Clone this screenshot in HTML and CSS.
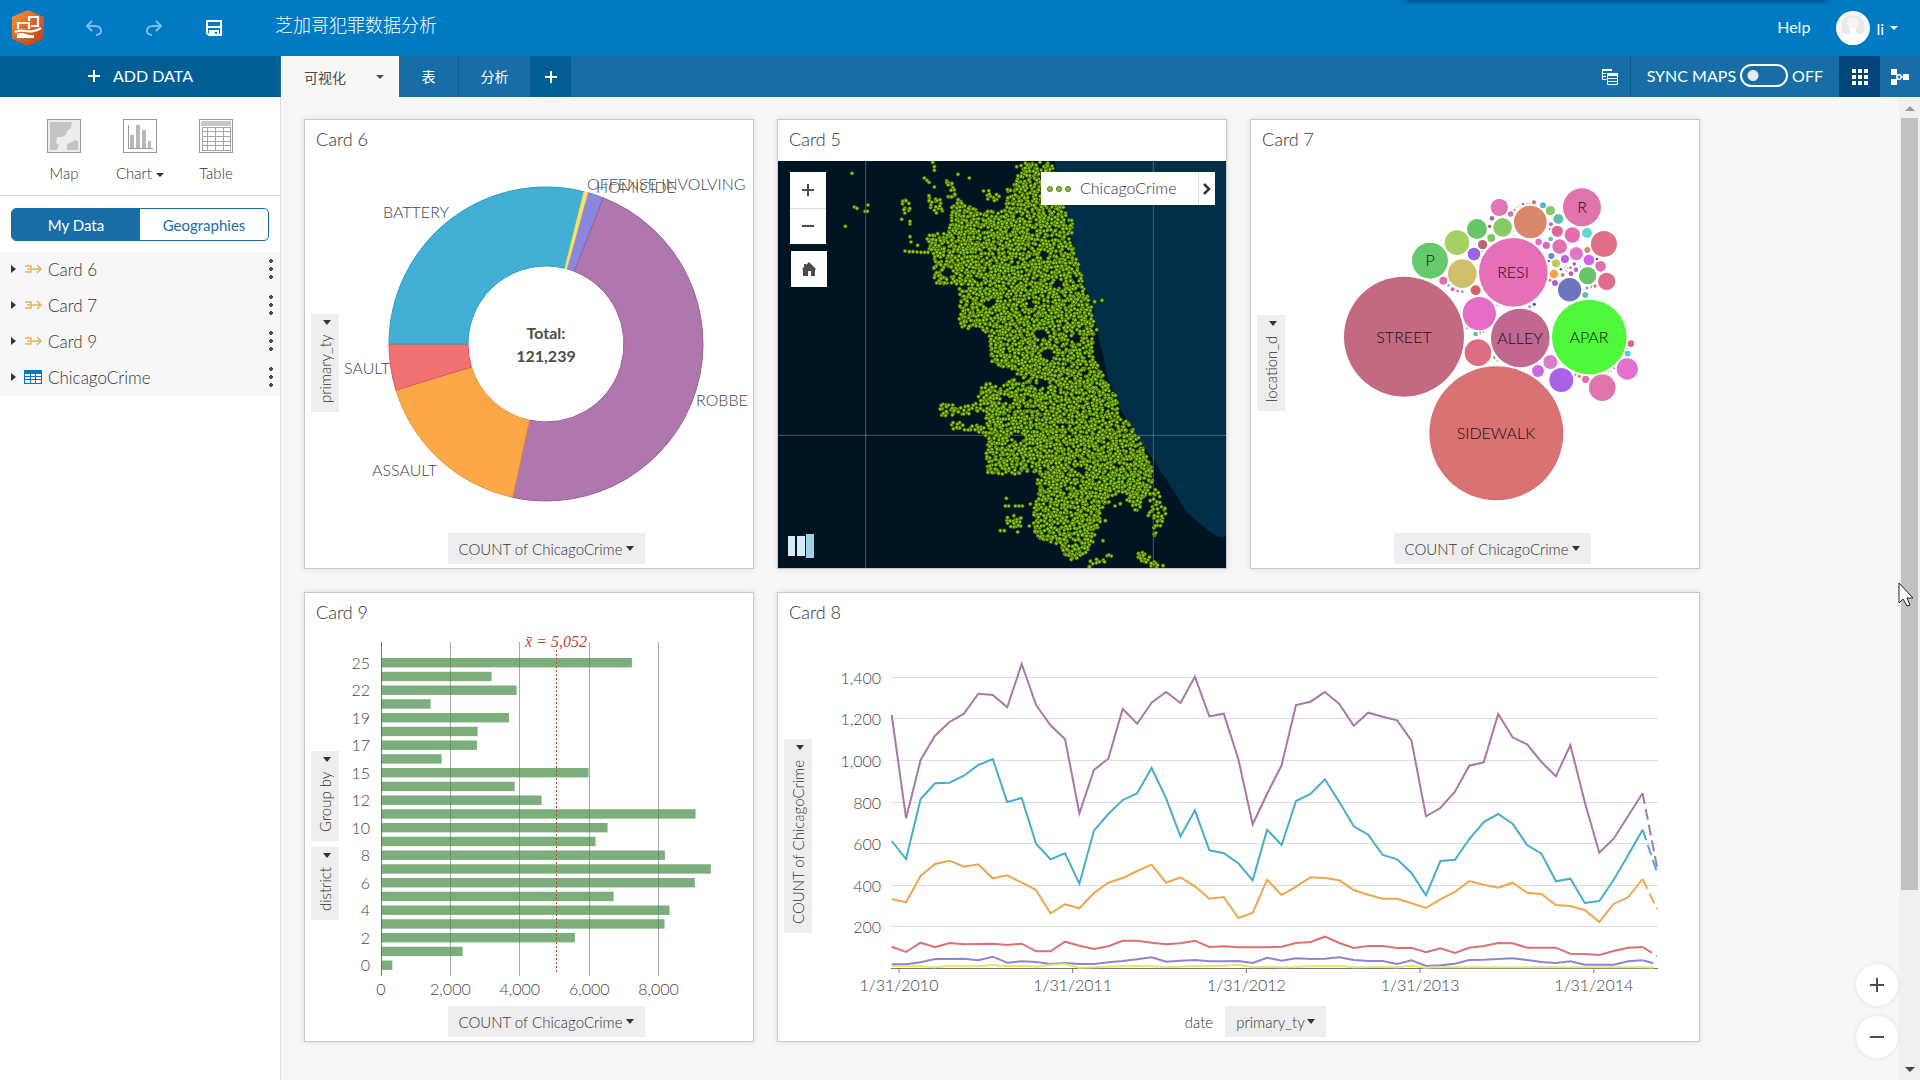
FILE: index.html
```html
<!DOCTYPE html>
<html lang="zh-CN">
<head>
    <meta charset="UTF-8">
    <title>芝加哥犯罪数据分析</title>
    <link rel="stylesheet" href="styles.css">
</head>
<body>
<header class="header">
    <a class="logo" href="#" aria-label="Home">
        <svg width="34" height="38" viewBox="0 0 34 38">
            <defs>
                <linearGradient id="hex" x1="0" y1="0" x2="1" y2="1">
                    <stop offset="0" stop-color="#f0a030"/>
                    <stop offset="0.5" stop-color="#d9622b"/>
                    <stop offset="1" stop-color="#b5421f"/>
                </linearGradient>
            </defs>
            <path d="M17 1 L33 8 V30 L17 37 L1 30 V8 Z" fill="url(#hex)"/>
            <path d="M7 20 V14 H18 V20 M18 9 V8 H27 V17 H20 M18 12 V8" fill="none" stroke="#fff" stroke-width="2.2"/>
            <path d="M4 23 C12 18 18 27 30 19" fill="none" stroke="#fff" stroke-width="2.2"/>
            <path d="M6 25 C12 22 16 27 23 26 V29 H6 Z" fill="#fff"/>
        </svg>
    </a>
    <button class="icon-btn faded" aria-label="Undo">
        <svg width="18" height="18" viewBox="0 0 18 18"><path d="M7 2 L2 7 L7 12 M2 7 H10 C14 7 16 9 16 12 C16 14 14 16 11 16" /></svg>
    </button>
    <button class="icon-btn faded" aria-label="Redo">
        <svg width="18" height="18" viewBox="0 0 18 18"><path d="M11 2 L16 7 L11 12 M16 7 H8 C4 7 2 9 2 12 C2 14 4 16 7 16"/></svg>
    </button>
    <button class="icon-btn" aria-label="Save">
        <svg width="18" height="18" viewBox="0 0 18 18"><path d="M2 2 H16 V16 H4 L2 14 Z M2 8 H16 M5 16 V12 H13 V16"/><path d="M7 13 H9 V15 H7 Z"/></svg>
    </button>
    <h1 class="title">芝加哥犯罪数据分析</h1>
    <a class="help" href="#">Help</a>
    <button class="user">
        <svg width="34" height="34" viewBox="0 0 34 34">
            <circle cx="17" cy="17" r="17" fill="#f7f7f7"/>
            <path d="M6 12 C6 2 28 2 28 12 V20 C28 25 6 25 6 20 Z" fill="#e9e9e9"/>
            <circle cx="17" cy="12" r="6" fill="#f6f4f2"/>
            <path d="M14 17 H20 V22 C26 23 28 25 29 29 C22 36 12 36 5 29 C6 25 8 23 14 22 Z" fill="#fff"/>
        </svg>
        <span>li</span>
        <i class="caret"></i>
    </button>
</header>

<nav class="toolbar">
    <button class="add-data">
        <svg width="14" height="14" viewBox="0 0 14 14"><path d="M7 1 V13 M1 7 H13"/></svg>
        ADD DATA
    </button>
    <button class="tab active">可视化 <i class="caret"></i></button>
    <button class="tab">表</button>
    <button class="tab wide">分析</button>
    <button class="tab-add" aria-label="Add page">
        <svg width="14" height="14" viewBox="0 0 14 14"><path d="M7 1 V13 M1 7 H13"/></svg>
    </button>
    <button class="copy-btn" aria-label="Card list">
        <svg width="18" height="18" viewBox="0 0 18 18">
            <path d="M5.500 11.500 H1.500 V1 M2 5.500 H5 M2 8.500 H5" fill="none" stroke="#fff"/>
            <path d="M6.500 5 V16.500 H16.500 V5 M7 10.500 H16 M7 13.500 H16" fill="none" stroke="#fff"/>
            <path d="M1 1 H11 V3 H1 Z M6 5 H17 V8 H6 Z" fill="#fff"/>
        </svg>
    </button>
    <label class="sync">SYNC MAPS <input type="checkbox"> <span>OFF</span></label>
    <button class="view-btn active" aria-label="Page view">
        <svg width="16" height="16" viewBox="0 0 16 16" fill="#fff">
            <path d="M0 0h4v4H0zM6 0h4v4H6zM12 0h4v4h-4zM0 6h4v4H0zM6 6h4v4H6zM12 6h4v4h-4zM0 12h4v4H0zM6 12h4v4H6zM12 12h4v4h-4z"/>
        </svg>
    </button>
    <button class="view-btn" aria-label="Analysis view">
        <svg width="20" height="18" viewBox="0 0 20 18">
            <path d="M1 1h6v6H1zM1 11h6v6H1zM13 6h6v6h-6z" fill="#fff"/>
            <path d="M5 5 L8 8 M5 13 L8 10 M11 9 H14" stroke="#fff" stroke-width="1.6"/>
            <circle cx="9" cy="9" r="2.2" fill="none" stroke="#fff" stroke-width="1.4"/>
        </svg>
    </button>
</nav>

<div class="main">
    <aside class="sidebar">
        <div class="tools">
            <button class="tool">
                <svg width="34" height="34" viewBox="0 0 34 34">
                    <rect x="0.500" y="0.500" width="33" height="33" fill="#ededed" stroke="#999"/>
                    <path d="M3 3 H25 L24 9 L20 12 L19 16 L14 18 L10 18 L9 24 L12 26 L10 31 H3 Z" fill="#c4c4c4"/>
                    <path d="M20 31 V25 L25 23 L28 21 L31 22 V31 Z" fill="#c4c4c4"/>
                </svg>
                <span>Map</span>
            </button>
            <button class="tool">
                <svg width="34" height="34" viewBox="0 0 34 34">
                    <rect x="0.500" y="0.500" width="33" height="33" fill="#fff" stroke="#999"/>
                    <path d="M7 16h4v13H7zM13 6h4v23h-4zM19 11h4v18h-4zM25 22h3v7h-3z" fill="#b8b8b8"/>
                    <path d="M5.500 6 V29.500 H30" fill="none" stroke="#999"/>
                </svg>
                <span>Chart <i class="caret"></i></span>
            </button>
            <button class="tool">
                <svg width="34" height="34" viewBox="0 0 34 34">
                    <rect x="0.500" y="0.500" width="33" height="33" fill="#fff" stroke="#999"/>
                    <path d="M2 2h30v5H2z" fill="#c8c8c8"/>
                    <path d="M3.500 8 V31 M8.500 8 V31 M16.500 8 V31 M24.500 8 V31 M31.500 8 V31 M3 12.500 H32 M3 17.500 H32 M3 22.500 H32 M3 26.500 H32 M3 31.500 H32 M3 8.500 H32" stroke="#a5a5a5"/>
                </svg>
                <span>Table</span>
            </button>
        </div>
        <div class="segment">
            <button class="active">My Data</button>
            <button>Geographies</button>
        </div>
        <ul class="layers">
            <li>
                <i class="expander"></i>
                <svg class="layer-icon" width="18" height="12" viewBox="0 0 18 12"><path d="M1 3 H7 V9 H1 M3 6 H17 M13 2 L17 6 L13 10"/></svg>
                <span>Card 6</span>
                <button class="more" aria-label="Card 6 options"></button>
            </li>
            <li>
                <i class="expander"></i>
                <svg class="layer-icon" width="18" height="12" viewBox="0 0 18 12"><path d="M1 3 H7 V9 H1 M3 6 H17 M13 2 L17 6 L13 10"/></svg>
                <span>Card 7</span>
                <button class="more" aria-label="Card 7 options"></button>
            </li>
            <li>
                <i class="expander"></i>
                <svg class="layer-icon" width="18" height="12" viewBox="0 0 18 12"><path d="M1 3 H7 V9 H1 M3 6 H17 M13 2 L17 6 L13 10"/></svg>
                <span>Card 9</span>
                <button class="more" aria-label="Card 9 options"></button>
            </li>
            <li>
                <i class="expander"></i>
                <svg width="18" height="14" viewBox="0 0 18 14">
                    <rect width="18" height="14" fill="#0079c1"/>
                    <path d="M1 4h5v2H1zM7 4h4v2H7zM12 4h5v2h-5zM1 7h5v2H1zM7 7h4v2H7zM12 7h5v2h-5zM1 10h5v3H1zM7 10h4v3H7zM12 10h5v3h-5z" fill="#fff"/>
                </svg>
                <span>ChicagoCrime</span>
                <button class="more" aria-label="ChicagoCrime options"></button>
            </li>
        </ul>
    </aside>

    <main class="board">
        <section class="card">
            <h2>Card 6</h2>
            <div class="card-body">
                <div class="axis">
                    <select class="chip vertical" aria-label="Category field"><option>primary_ty</option></select>
                </div>
                <svg class="chart" id="donut" viewBox="0 0 414 372"></svg>
                <div class="card-footer">
                    <select class="chip" aria-label="Statistic"><option>COUNT of ChicagoCrime</option></select>
                </div>
            </div>
        </section>

        <section class="card">
            <h2>Card 5</h2>
            <div class="map">
                <svg class="chart" id="map" viewBox="21 153 1344 1221"></svg>
                <div class="map-zoom">
                    <button aria-label="Zoom in"><svg width="14" height="14" viewBox="0 0 14 14"><path d="M7 1 V13 M1 7 H13"/></svg></button>
                    <button aria-label="Zoom out"><svg width="14" height="14" viewBox="0 0 14 14"><path d="M1 7 H13"/></svg></button>
                </div>
                <button class="map-home" aria-label="Default extent">
                    <svg width="14" height="14" viewBox="0 0 14 14"><path d="M2 2 H4 V3 L7 0 L14 7 L13 8 V14 H9 V9 H6 V14 H1 V8 L0 7 L2 5 Z" fill="#4c4c4c"/></svg>
                </button>
                <div class="legend">
                    <svg width="26" height="8" viewBox="0 0 26 8" fill="#8fbf3f" stroke="#4d7a1a">
                        <circle cx="4" cy="4" r="2.500"/><circle cx="13" cy="4" r="2.500"/><circle cx="22" cy="4" r="2.500"/>
                    </svg>
                    <span>ChicagoCrime</span>
                    <button aria-label="Show legend">
                        <svg width="8" height="12" viewBox="0 0 8 12"><path d="M1 1 L6 6 L1 11"/></svg>
                    </button>
                </div>
                <svg class="slides" width="26" height="24" viewBox="0 0 26 24">
                    <path d="M0 2h7v20H0zM9 2h8v20H9z" fill="#d6eaf8"/>
                    <path d="M18 0h8v24h-8z" fill="#9fcfea"/>
                </svg>
            </div>
        </section>

        <section class="card">
            <h2>Card 7</h2>
            <div class="card-body">
                <div class="axis">
                    <select class="chip vertical" aria-label="Category field"><option>location_d</option></select>
                </div>
                <svg class="chart" id="bubbles" viewBox="0 0 414 372"></svg>
                <div class="card-footer">
                    <select class="chip" aria-label="Statistic"><option>COUNT of ChicagoCrime</option></select>
                </div>
            </div>
        </section>

        <section class="card">
            <h2>Card 9</h2>
            <div class="card-body">
                <div class="axis">
                    <select class="chip vertical" aria-label="Group by"><option>Group by</option></select>
                    <select class="chip vertical" aria-label="Category field"><option>district</option></select>
                </div>
                <svg class="chart" id="bars" viewBox="0 0 414 372"></svg>
                <div class="card-footer">
                    <select class="chip" aria-label="Statistic"><option>COUNT of ChicagoCrime</option></select>
                </div>
            </div>
        </section>

        <section class="card double">
            <h2>Card 8</h2>
            <div class="card-body">
                <div class="axis">
                    <select class="chip vertical" aria-label="Statistic"><option>COUNT of ChicagoCrime</option></select>
                </div>
                <svg class="chart" id="lines" viewBox="0 0 887 372"></svg>
                <div class="card-footer">
                    <label for="subgroup">date</label>
                    <select class="chip" id="subgroup"><option>primary_ty</option></select>
                </div>
            </div>
        </section>
    </main>

    <div class="scrollbar"><i class="up"></i><div class="track"><div class="thumb"></div></div><i class="down"></i></div>
    <div class="page-zoom">
        <button aria-label="Zoom page in"><svg width="14" height="14" viewBox="0 0 14 14"><path d="M7 0 V14 M0 7 H14"/></svg></button>
        <button aria-label="Zoom page out"><svg width="14" height="14" viewBox="0 0 14 14"><path d="M0 7 H14"/></svg></button>
    </div>
    <svg class="cursor" width="17" height="26" viewBox="0 0 17 26"><path d="M1 1 V21 L5 17 L9 24 L12 23 L9 16 H15 Z" fill="#fff" stroke="#222"/></svg>
</div>
<script src="charts.js"></script>
</body>
</html>
```

FILE: styles.css
```css
* {
    box-sizing: border-box;
}

html, body {
    height: 100%;
}

body {
    margin: 0;
    display: flex;
    flex-direction: column;
    font-family: Lato, "Noto Sans CJK SC", sans-serif;
    font-size: 16px;
    font-weight: 300;
    color: #333;
    background: #f7f7f7;
    overflow: hidden;
}

button {
    border: 0;
    padding: 0;
    background: none;
    font: inherit;
    color: inherit;
    cursor: pointer;
}

a {
    color: inherit;
    text-decoration: none;
}

.caret {
    display: inline-block;
    border: 4px solid transparent;
    border-top-color: currentColor;
    border-bottom: 0;
}

/* header */
.header {
    position: relative;
    display: flex;
    align-items: center;
    flex: none;
    height: 56px;
    padding: 0 22px 0 11px;
    background: #007ac2;
    color: #fff;
    font-weight: 400;
}

.header::before {
    content: "";
    position: absolute;
    top: -4px;
    right: 94px;
    width: 420px;
    height: 4px;
    box-shadow: 0 0 5px 1px #003f70;
}

.logo {
    display: flex;
    margin-right: 40px;
}

.icon-btn {
    display: flex;
    margin-right: 42px;
}

.icon-btn svg {
    fill: none;
    stroke: #fff;
    stroke-width: 2;
}

.icon-btn.faded {
    opacity: 0.5;
}

.title {
    flex: 1;
    margin: 0 0 8px 10px;
    font-size: 18px;
    font-weight: 300;
}

.help {
    padding-bottom: 3px;
}

.user {
    display: flex;
    align-items: center;
    gap: 6px;
    margin-left: 26px;
}

/* toolbar */
.toolbar {
    display: flex;
    flex: none;
    height: 41px;
    background: #176ea6;
    color: #fff;
    font-weight: 400;
}

.toolbar svg {
    display: block;
    margin: auto;
}

.add-data {
    display: flex;
    align-items: center;
    justify-content: center;
    gap: 12px;
    width: 280px;
    margin-right: 1px;
    padding-bottom: 2px;
    background: #005e95;
}

.add-data svg {
    margin: 0;
}

.add-data svg, .tab-add svg {
    stroke: #fff;
    stroke-width: 2;
}

.tab {
    width: 60px;
    padding-bottom: 2px;
    border-right: 1px solid #0a5c92;
    font-size: 14px;
}

.tab.wide {
    width: 72px;
}

.tab.active {
    display: flex;
    align-items: center;
    justify-content: space-between;
    width: 118px;
    padding: 1px 15px 0 23px;
    border: 0;
    background: #f7f7f7;
    color: #4c4c4c;
}

.tab-add {
    width: 40px;
    background: #005e95;
}

.copy-btn {
    width: 41px;
    margin-left: auto;
    border-right: 1px solid #0a5c92;
}

.sync {
    display: flex;
    align-items: center;
    gap: 4px;
    padding: 0 16px 2px;
    font-size: 16px;
}

.sync input {
    appearance: none;
    width: 48px;
    height: 23px;
    margin: 0;
    border: 2px solid #fff;
    border-radius: 12px;
    background: radial-gradient(circle at 11px 50%, #e8e8f0 5px, transparent 6px);
}

.view-btn {
    width: 40px;
}

.view-btn.active {
    width: 41px;
    background: #00467a;
}

/* sidebar */
.main {
    position: relative;
    display: flex;
    flex: 1;
    min-height: 0;
}

.sidebar {
    flex: none;
    width: 281px;
    border-right: 1px solid #ddd;
    background: #fff;
}

.tools {
    display: flex;
    justify-content: center;
    gap: 16px;
    height: 99px;
    padding-top: 22px;
    border-bottom: 1px solid #ddd;
    font-size: 15px;
}

.tool {
    display: flex;
    flex-direction: column;
    align-items: center;
    gap: 11px;
    width: 60px;
}

.tool .caret {
    vertical-align: middle;
}

.segment {
    display: flex;
    margin: 12px 11px 11px;
    border: 1px solid #176ea6;
    border-radius: 5px;
    overflow: hidden;
    color: #176ea6;
    font-size: 15px;
    font-weight: 400;
}

.segment button {
    flex: 1;
    height: 31px;
}

.segment .active {
    background: #176ea6;
    color: #fff;
}

.layers {
    margin: 0;
    padding: 0;
    list-style: none;
    background: #f7f7f7;
    font-size: 17px;
}

.layers li {
    display: flex;
    align-items: center;
    gap: 6px;
    height: 36px;
    padding: 0 0 2px 11px;
}

.layers svg {
    margin-left: 2px;
}

.expander {
    border: 4px solid transparent;
    border-left: 5px solid #333;
    border-right: 0;
}

.layer-icon {
    fill: none;
    stroke: #f0b060;
    stroke-width: 1.5;
}

.more {
    width: 18px;
    height: 24px;
    margin-left: auto;
    background: radial-gradient(circle, #4c4c4c 1px, #4c4c4c 2px, transparent 2px) center / 8px 8px repeat-y;
}

/* board */
.board {
    flex: 1;
    display: grid;
    grid-template-columns: repeat(3, minmax(0, 450px));
    align-content: start;
    gap: 23px;
    padding: 22px 23px;
}

.card {
    border: 1px solid #c8c8c8;
    background: #fff;
    box-shadow: 0 0 6px #ddd;
}

.card.double {
    grid-column: span 2;
}

.card h2 {
    margin: 0;
    padding: 0 0 2px 11px;
    font-size: 18px;
    font-weight: 300;
    line-height: 39px;
}

.card-body {
    display: grid;
    grid-template-columns: 28px minmax(0, 1fr);
    padding: 0 0 4px 6px;
}

.axis {
    grid-row: span 2;
    display: flex;
    flex-direction: column;
    justify-content: center;
    gap: 6px;
}

.chart {
    display: block;
    width: 100%;
    height: auto;
}

.card-footer {
    display: flex;
    justify-content: center;
    align-items: center;
    gap: 12px;
    height: 31px;
    font-size: 15px;
}

.chip {
    appearance: none;
    height: 31px;
    padding: 0 21px 0 11px;
    border: 0;
    border-radius: 0;
    background: #eee url("data:image/svg+xml,%3Csvg xmlns='http://www.w3.org/2000/svg' width='8' height='5'%3E%3Cpath d='M0 0h8L4 5z' fill='%23333'/%3E%3C/svg%3E") no-repeat right 11px center;
    color: #333;
    font: 300 15px Lato, sans-serif;
}

.chip.vertical {
    writing-mode: vertical-rl;
    transform: rotate(180deg);
    width: 28px;
    height: auto;
    padding: 9px 5px 20px 0;
    background-image: url("data:image/svg+xml,%3Csvg xmlns='http://www.w3.org/2000/svg' width='8' height='5'%3E%3Cpath d='M0 5h8L4 0z' fill='%23333'/%3E%3C/svg%3E");
    background-position: left 8px bottom 6px;
}

/* map */
.map {
    position: relative;
    background: #001522;
}

.map-zoom, .map-home, .legend, .slides {
    position: absolute;
}

.map-zoom {
    top: 11px;
    left: 12px;
    display: flex;
    flex-direction: column;
    background: #fff;
}

.map-zoom button {
    width: 36px;
    height: 36px;
}

.map-zoom button + button {
    border-top: 1px solid #ddd;
}

.map-zoom svg, .page-zoom svg {
    stroke: #4c4c4c;
    stroke-width: 2;
}

.map-home {
    top: 90px;
    left: 13px;
    width: 36px;
    height: 36px;
    background: #fff;
}

.legend {
    top: 11px;
    right: 11px;
    display: flex;
    align-items: center;
    width: 174px;
    height: 33px;
    padding-left: 5px;
    background: #fff;
    font-size: 16px;
}

.legend span {
    flex: 1;
    padding: 0 0 2px 8px;
}

.legend button {
    width: 17px;
    height: 33px;
    border-left: 1px solid #ddd;
}

.legend button svg {
    fill: none;
    stroke: #333;
    stroke-width: 2.5;
}

.slides {
    left: 10px;
    bottom: 10px;
}

/* charts */
.chart text {
    font-size: 16px;
    fill: #444;
    dominant-baseline: central;
}

.chart .total {
    font-weight: 700;
    fill: #4c4c4c;
}

.chart .name {
    fill: #111;
}

.chart .mean {
    font: italic 16px "Liberation Serif", serif;
    fill: #c0432f;
}

.grid-line {
    stroke: #aaa;
}

.grid-line.light {
    stroke: #ddd;
}

.axis-line {
    stroke: #777;
}

.mean-line {
    stroke: #c0432f;
    stroke-dasharray: 2 2;
}

.bar {
    fill: #3c883c;
    fill-opacity: 0.68;
}

.series {
    fill: none;
    stroke-width: 2;
}

.series.partial {
    stroke-dasharray: 11 5;
}

.lake {
    fill: #012f47;
}

.graticule {
    stroke: #8ba0ac;
    stroke-opacity: 0.5;
    stroke-width: 3;
}

.dot {
    fill: #8fc91a;
    stroke: #2c4b00;
    stroke-width: 2;
}

/* scrollbar and page zoom */
.scrollbar {
    flex: none;
    display: flex;
    flex-direction: column;
    align-items: center;
    width: 21px;
    padding: 9px 0 8px;
    background: #f0f0f0;
}

.scrollbar .up, .scrollbar .down {
    border: 5px solid transparent;
    border-top: 0;
    border-bottom-color: #999;
}

.scrollbar .down {
    border-top: 5px solid #444;
    border-bottom: 0;
}

.track {
    flex: 1;
    margin: 7px 0;
}

.thumb {
    width: 17px;
    height: 82%;
    background: #c1c1c1;
}

.page-zoom {
    position: absolute;
    right: 22px;
    bottom: 22px;
    display: flex;
    flex-direction: column;
    gap: 10px;
}

.page-zoom button {
    width: 42px;
    height: 42px;
    border-radius: 50%;
    background: #fff;
    box-shadow: 0 0 4px #ddd;
}

.cursor {
    position: absolute;
    top: 485px;
    right: 5px;
}
```

FILE: charts.js
```js
const NS = 'http://www.w3.org/2000/svg';

function add(parent, tag, attrs, text) {
    const el = document.createElementNS(NS, tag);
    for (const key in attrs) el.setAttribute(key, attrs[key]);
    if (text !== undefined) el.textContent = text;
    parent.appendChild(el);
    return el;
}

function label(parent, x, y, text, anchor, cls) {
    add(parent, 'text', { x, y: Math.round(y) - 1, 'text-anchor': anchor || 'start', class: cls || '' }, text);
}

// donut
const donut = document.getElementById('donut');
const cx = 207, cy = 183, outer = 157, inner = 78;
const point = (deg, r) => {
    const a = deg * Math.PI / 180;
    return (cx + r * Math.sin(a)) + ' ' + (cy - r * Math.cos(a));
};
[
    [15.4, 21.4, '#8b87dc', '#736fc9'],
    [21.4, 192.3, '#b077ae', '#9a5f9b'],
    [192.3, 252.9, '#fca849', '#ea9434'],
    [252.9, 270, '#f07272', '#dd5a5a'],
    [270, 374, '#42b0d5', '#2f9cc2'],
    [14, 15.4, '#f8e46c', '#efd95a']
].forEach(([from, to, fill, stroke]) => {
    const large = to - from > 180 ? 1 : 0;
    add(donut, 'path', {
        d: `M${point(from, outer)} A${outer} ${outer} 0 ${large} 1 ${point(to, outer)} L${point(to, inner)} A${inner} ${inner} 0 ${large} 0 ${point(from, inner)} Z`,
        fill, stroke
    });
});
label(donut, 44, 51, 'BATTERY');
label(donut, 5, 207, 'SAULT');
label(donut, 33, 309, 'ASSAULT');
label(donut, 357, 239, 'ROBBE');
label(donut, 248, 23, 'OFFENSE INVOLVING');
label(donut, 257, 26, 'HOMICIDE');
label(donut, cx, 172, 'Total:', 'middle', 'total');
label(donut, cx, 195, '121,239', 'middle', 'total');

// bubbles: x, y, radius, colour
const bubbles = document.getElementById('bubbles');
const pack = add(bubbles, 'g', { transform: 'translate(-45 -51) scale(0.3333)' });
[
    [492, 680, 180, '#c46a80'], [769, 970, 201, '#d97272'], [820, 487, 103, '#e570b8'],
    [841, 684, 88, '#c2688f'], [1048, 681, 112, '#50f83c'], [1026, 292, 57, '#e075ac'],
    [570, 452, 54, '#66c96c'], [871, 336, 49, '#d8876c'], [718, 611, 50, '#e56dc5'],
    [714, 728, 40, '#dd6e80'], [667, 491, 43, '#d2bf6c'], [651, 398, 37, '#a5d066'],
    [711, 357, 30, '#66c566'], [788, 352, 28, '#88cb66'], [778, 292, 26, '#e275b8'],
    [989, 539, 35, '#6c75bb'], [1092, 402, 39, '#de7088'], [1100, 514, 26, '#de6e8c'],
    [1043, 497, 26, '#66c566'], [964, 810, 36, '#a963e8'], [1087, 833, 40, '#e075ac'],
    [1162, 777, 32, '#e36fd0'], [931, 756, 21, '#d87ccb'], [894, 783, 18, '#cb63e8'],
    [702, 432, 19, '#9963e8'], [728, 404, 14, '#b56a78'], [754, 384, 12, '#82c562'],
    [707, 541, 15, '#d95f66'], [610, 512, 12, '#e06cb0'], [997, 375, 23, '#e36cb0'],
    [952, 364, 17, '#e06898'], [959, 410, 22, '#e070b0'], [1009, 431, 20, '#e276c8'],
    [955, 327, 15, '#62bfae'], [931, 302, 14, '#88c866'], [909, 286, 9, '#4fb5e0'],
    [1041, 369, 15, '#60d6dc'], [1047, 450, 16, '#d660e8'], [1082, 469, 16, '#e070b0'],
    [1042, 420, 9, '#cf9060'], [942, 492, 13, '#fba048'], [948, 460, 12, '#bfc858'],
    [934, 438, 9, '#5f8fcc'], [975, 447, 12, '#bb60e0'], [919, 406, 11, '#df60d0'],
    [896, 396, 10, '#e070c8'], [945, 519, 9, '#b060d0'], [1036, 555, 9, '#60bfb0'],
    [1173, 701, 10, '#dc6888'], [1163, 731, 9, '#60cbdc'], [1037, 808, 11, '#df6cae'],
    [1018, 799, 5, '#d98c60'], [1006, 794, 3, '#dd7070'], [812, 312, 8, '#de6aa0'],
    [756, 325, 7, '#a866b4'], [749, 349, 5, '#b0557c'], [882, 277, 6, '#c46a80'],
    [849, 282, 4, '#a866c4'], [860, 281, 2, '#d98c60'], [869, 280, 2, '#e06cb0'],
    [840, 287, 2, '#66c566'], [833, 292, 2, '#e06cb0'], [824, 299, 3, '#c46a80'],
    [933, 343, 6, '#d06898'], [929, 357, 3, '#5f8fcc'], [932, 387, 7, '#60bfae'],
    [707, 672, 7, '#62c088'], [681, 655, 3, '#62c088'], [721, 668, 3, '#62a8c0'],
    [731, 666, 2, '#b060d0'], [739, 664, 1, '#62c088'], [763, 743, 4, '#66c566'],
    [772, 752, 3, '#a5d066'], [883, 583, 5, '#4858b8'], [869, 590, 4, '#d868a8'],
    [770, 587, 2, '#e06cb0'], [778, 590, 1, '#d98c60'], [626, 526, 4, '#60bfd0'],
    [638, 538, 6, '#e06890'], [653, 543, 4, '#d660c8'], [667, 545, 4, '#60b8b0'],
    [993, 491, 7, '#c46088'], [1008, 479, 7, '#b868d8'], [968, 495, 6, '#bb9458'],
    [963, 478, 4, '#605890'], [1003, 462, 5, '#a858a0'], [992, 473, 4, '#d06890'],
    [979, 466, 2, '#66c566'], [984, 474, 2, '#cf9060'], [976, 481, 2, '#cf9060'],
    [981, 485, 2, '#e06cb0'], [974, 472, 2, '#66a5c5'], [1021, 470, 2, '#60bfae'],
    [1071, 447, 4, '#5c4c98'], [927, 453, 4, '#8858c8'], [930, 511, 4, '#c46a80'],
    [1065, 528, 5, '#dc6888'], [1054, 531, 3, '#62c088'], [1041, 534, 4, '#c060d0'],
    [1032, 539, 2, '#60bfd0'], [1162, 715, 2, '#e06cb0'], [1123, 775, 3, '#62a8c0'],
    [1115, 781, 2, '#66c566'], [1107, 784, 2, '#62a8c0'], [902, 758, 1, '#60bfae'],
    [727, 424, 2, '#5f8fcc'], [823, 376, 2, '#a5d066'], [829, 377, 1, '#e06cb0']
].forEach(([x, y, r, fill]) => add(pack, 'circle', { cx: x, cy: y, r, fill }));
label(bubbles, 119, 176, 'STREET', 'middle', 'name');
label(bubbles, 211, 272, 'SIDEWALK', 'middle', 'name');
label(bubbles, 228, 111, 'RESI', 'middle', 'name');
label(bubbles, 235, 177, 'ALLEY', 'middle', 'name');
label(bubbles, 304, 176, 'APAR', 'middle', 'name');
label(bubbles, 297, 46, 'R', 'middle', 'name');
label(bubbles, 145, 99, 'P', 'middle', 'name');

// bars by district
const bars = document.getElementById('bars');
const districts = [
    ['25', 7230], ['', 3188], ['22', 3908], ['', 1430], ['19', 3687], ['', 2784],
    ['17', 2765], ['', 1747], ['15', 5982], ['', 3850], ['12', 4628], ['', 9064],
    ['10', 6529], ['', 6183], ['8', 8181], ['', 9506], ['6', 9045], ['', 6702],
    ['4', 8315], ['', 8171], ['2', 5588], ['', 2352], ['0', 326]
];
const barX = v => 42 + v * 0.0347;
[0, 2000, 4000, 6000, 8000].forEach(v => {
    const x = Math.floor(barX(v)) + 0.5;
    add(bars, 'line', { x1: x, x2: x, y1: 8, y2: 342, class: v ? 'grid-line' : 'axis-line' });
    label(bars, barX(v), 355, v.toLocaleString('en-US'), 'middle');
});
districts.forEach(([name, value], i) => {
    const y = 28.7 + i * 13.75;
    add(bars, 'rect', { x: 42, y: y - 4.7, width: value * 0.0347, height: 9.4, class: 'bar' });
    if (name) label(bars, 31, y, name, 'end');
});
add(bars, 'line', { x1: 217.5, x2: 217.5, y1: 16, y2: 338, class: 'mean-line' });
label(bars, 217, 8, 'x̄ = 5,052', 'middle', 'mean');

// monthly lines, heights on a 3x plotting grid
const lines = document.getElementById('lines');
for (let v = 200; v <= 1400; v += 200) {
    const y = Math.round(334 - v * 0.2081) + 0.5;
    add(lines, 'line', { x1: 79, x2: 846, y1: y, y2: y, class: 'grid-line light' });
    label(lines, 69, y, v.toLocaleString('en-US'), 'end');
}
add(lines, 'line', { x1: 79, x2: 846, y1: 334.5, y2: 334.5, class: 'axis-line' });
[2010, 2011, 2012, 2013, 2014].forEach((year, i) => {
    const x = 87 + i * 173.7;
    add(lines, 'line', { x1: x, x2: x, y1: 334, y2: 339, class: 'axis-line' });
    label(lines, x, 351, '1/31/' + year, 'middle');
});
const series = [
    ['#8b87cf', [1138,1138,1132,1122,1122,1121,1126,1115,1133,1129,1131,1137,1134,1137,1137,1132,1128,1123,1117,1130,1127,1125,1129,1129,1128,1134,1118,1127,1120,1122,1121,1117,1125,1128,1128,1137,1126,1143,1141,1136,1125,1124,1122,1120,1125,1131,1134,1129,1139,1139,1139,1129,1126,1138]],
    ['#ece36a', [1143,1143,1144,1147,1143,1144,1144,1140,1144,1142,1145,1140,1137,1148,1147,1145,1144,1143,1144,1146,1145,1143,1144,1142,1139,1147,1145,1147,1146,1144,1143,1143,1147,1146,1146,1147,1142,1148,1146,1147,1147,1147,1147,1147,1147,1147,1147,1147,1147,1147,1147,1147,1147,1148]],
    ['#de7074', [1085,1101,1073,1087,1074,1078,1077,1076,1080,1076,1099,1099,1070,1082,1092,1084,1067,1067,1073,1078,1075,1067,1086,1084,1087,1087,1087,1085,1074,1071,1055,1074,1089,1083,1083,1089,1088,1102,1090,1104,1088,1083,1074,1075,1088,1088,1088,1106,1107,1110,1098,1088,1086,1113]],
    ['#efa64e', [942,952,873,837,827,845,838,880,871,893,915,985,958,970,924,893,879,858,839,893,877,904,941,936,999,984,884,930,905,877,879,886,915,929,941,941,955,969,943,921,888,899,908,893,923,927,960,963,975,1011,956,937,882,973]],
    ['#46aecb', [768,822,642,595,593,572,540,522,651,639,776,823,805,896,737,687,645,625,549,640,754,676,796,805,835,886,734,780,648,627,583,651,724,749,810,823,864,931,828,824,762,711,687,716,780,806,889,881,954,948,884,811,734,862]],
    ['#ab76a8', [390,700,525,452,411,386,326,330,367,237,360,421,462,685,555,521,372,416,353,321,354,275,394,386,522,718,626,541,360,350,321,357,422,383,395,406,467,694,669,620,542,532,387,457,478,531,574,480,652,803,761,693,625,845]]
];
series.forEach(([stroke, values]) => {
    const points = values.map((v, i) => (79.7 + i * 14.44).toFixed(1) + ',' + (v / 3 - 49).toFixed(1));
    add(lines, 'polyline', { points: points.slice(0, -1).join(' '), stroke, class: 'series' });
    add(lines, 'polyline', { points: points.slice(-2).join(' '), stroke, class: 'series partial' });
});

// crime map
const map = document.getElementById('map');
add(map, 'path', {
    class: 'lake',
    d: 'M852 153 L862 230 L880 300 L905 400 L935 510 L965 590 L985 690 L1010 800 L1050 900 L1095 975 L1140 1040 L1190 1115 L1250 1210 Q1300 1255 1340 1280 Q1355 1285 1366 1278 V153 Z'
});
add(map, 'path', { class: 'graticule', d: 'M284 153 V1376 M1147 153 V1376 M21 976 H1366' });

let seed = 7;
const random = () => {
    seed = (seed * 16807) % 2147483647;
    return seed / 2147483647;
};

function inside(x, y, poly) {
    let hit = false;
    for (let i = 0, j = poly.length - 2; i < poly.length; j = i, i += 2) {
        const xi = poly[i], yi = poly[i + 1], xj = poly[j], yj = poly[j + 1];
        if (yi > y !== yj > y && x < (xj - xi) * (y - yi) / (yj - yi) + xi) hit = !hit;
    }
    return hit;
}

// share of cells that hold a dot, outline points
const areas = [
    [0.95, [750,158, 845,153, 860,230, 880,300, 900,340, 908,420, 930,490, 940,540, 965,575, 970,660, 965,740, 985,760, 1010,820, 1035,850, 1050,910, 1090,960, 1120,1010, 1145,1080, 1145,1130, 1120,1160, 1100,1210, 1075,1180, 1040,1145, 1015,1175, 990,1200, 990,1240, 970,1280, 960,1320, 905,1345, 885,1330, 850,1300, 790,1280, 785,1200, 800,1150, 795,1090, 650,1095, 645,1010, 640,970, 645,910, 625,880, 625,840, 690,830, 740,785, 700,775, 660,755, 655,680, 630,655, 565,655, 565,525, 490,520, 487,430, 470,390, 520,370, 540,340, 540,290, 560,270, 590,285, 620,300, 705,300, 705,240, 735,210]],
    [0.6, [470,260, 515,270, 530,300, 510,325, 475,290]],
    [0.6, [520,210, 550,220, 575,270, 540,290, 520,240]],
    [0.6, [625,230, 660,245, 690,240, 685,262, 665,280, 640,260]],
    [0.7, [390,265, 420,262, 425,300, 390,320]],
    [0.7, [458,372, 520,370, 520,440, 480,430]],
    [0.8, [500,885, 540,878, 560,890, 620,875, 645,900, 600,912, 555,915, 500,918]],
    [0.75, [520,965, 540,935, 590,940, 640,950, 640,968, 600,965, 560,955, 540,968]],
    [0.6, [620,835, 645,815, 700,820, 700,850, 625,880]],
    [0.7, [700,1220, 755,1210, 760,1240, 735,1262, 705,1240]],
    [0.8, [880,1325, 950,1320, 930,1345, 900,1352, 882,1345]],
    [0.8, [952,1340, 1000,1345, 1020,1325, 1028,1340, 985,1365, 955,1372]],
    [0.8, [1098,1328, 1118,1325, 1160,1362, 1160,1376, 1115,1360]],
    [0.75, [1135,1130, 1160,1135, 1187,1200, 1180,1230, 1150,1285, 1140,1270, 1150,1230, 1130,1215]]
];
// rail yards, parks and the river
const gaps = [[825, 435, 14], [830, 735, 24], [810, 672, 22], [815, 820, 18], [742, 982, 22], [530, 487, 18], [860, 520, 16], [780, 585, 16], [660, 580, 16], [915, 685, 18], [705, 868, 16], [745, 810, 14], [930, 1080, 16]];
const dots = [[243,190],[250,291],[258,295],[291,285],[282,304],[289,304],[223,349],[485,157],[490,170],[490,181],[460,204],[468,211],[474,217],[490,231],[561,193],[595,204],[474,257],[402,423],[415,425],[426,425],[438,426],[450,427],[461,427],[471,427],[440,406],[417,380],[420,396],[417,334],[417,342],[392,328],[971,575],[993,571],[902,331],[904,342],[902,352],[977,659],[922,463],[933,513],[925,490],[706,1165],[703,1188],[713,1188],[733,1188],[744,1188],[754,1188],[778,1182],[688,1262],[700,1262],[740,1266],[775,1248],[1003,1232],[996,1292],[1032,1188],[1048,1181],[1176,1367],[1102,1342],[737,170]];
for (let row = 0, y = 156; y < 1376; y += 8, row++) {
    for (let x = 380 + (row % 2) * 5; x < 1200; x += 9.5) {
        const px = x + (random() - 0.5) * 10, py = y + (random() - 0.5) * 9;
        if (gaps.some(([gx, gy, r]) => Math.hypot((px - gx) / 1.3, py - gy) < r * 0.7)) continue;
        const area = areas.find(a => inside(px, py, a[1]));
        if (area && random() < area[0] * 0.93) dots.push([px, py]);
    }
}
dots.sort(() => random() - 0.5);
dots.forEach(([x, y]) => add(map, 'circle', { cx: x.toFixed(1), cy: y.toFixed(1), r: 5.5, class: 'dot' }));
```
